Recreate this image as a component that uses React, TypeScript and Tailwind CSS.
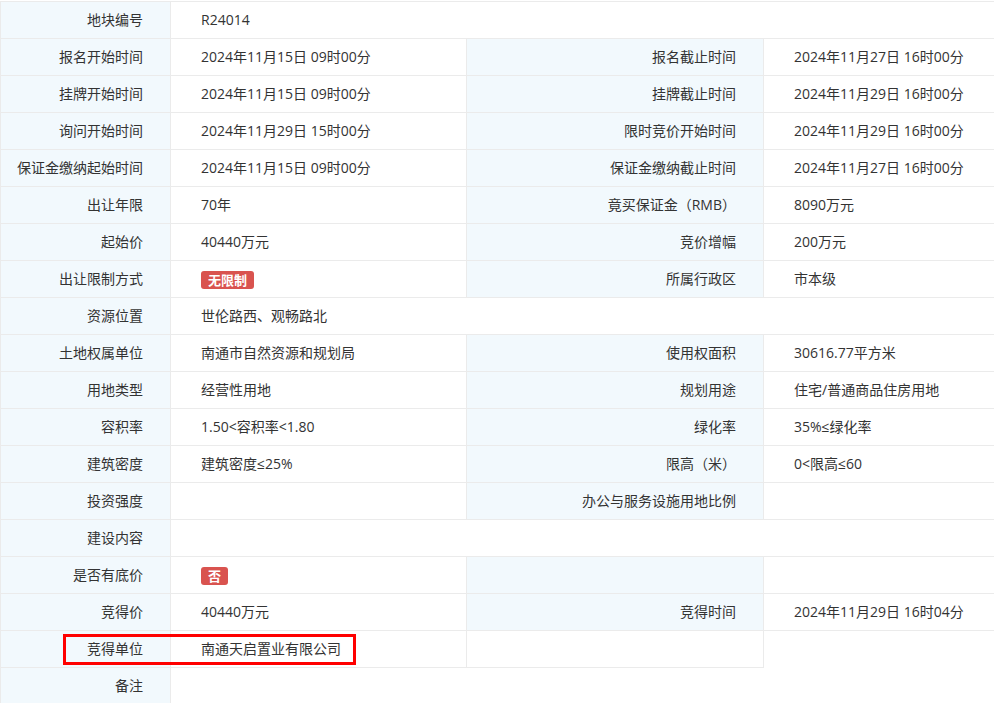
import type { ReactNode } from 'react'

type Cell = { text?: ReactNode; label?: boolean; span?: number }

const badge = (t: string) => (
  <span className="inline-block rounded-[3px] bg-[#d9534f] px-[7px] text-[13px] font-bold leading-[18px] text-white align-middle">
    {t}
  </span>
)

const L = (text?: ReactNode): Cell => ({ text, label: true })
const V = (text?: ReactNode, span?: number): Cell => ({ text, span })

const ROWS: Cell[][] = [
  [L('地块编号'), V('R24014', 3)],
  [L('报名开始时间'), V('2024年11月15日 09时00分'), L('报名截止时间'), V('2024年11月27日 16时00分')],
  [L('挂牌开始时间'), V('2024年11月15日 09时00分'), L('挂牌截止时间'), V('2024年11月29日 16时00分')],
  [L('询问开始时间'), V('2024年11月29日 15时00分'), L('限时竞价开始时间'), V('2024年11月29日 16时00分')],
  [L('保证金缴纳起始时间'), V('2024年11月15日 09时00分'), L('保证金缴纳截止时间'), V('2024年11月27日 16时00分')],
  [L('出让年限'), V('70年'), L('竟买保证金（RMB）'), V('8090万元')],
  [L('起始价'), V('40440万元'), L('竞价增幅'), V('200万元')],
  [L('出让限制方式'), V(badge('无限制')), L('所属行政区'), V('市本级')],
  [L('资源位置'), V('世伦路西、观畅路北', 3)],
  [L('土地权属单位'), V('南通市自然资源和规划局'), L('使用权面积'), V('30616.77平方米')],
  [L('用地类型'), V('经营性用地'), L('规划用途'), V('住宅/普通商品住房用地')],
  [L('容积率'), V('1.50<容积率<1.80'), L('绿化率'), V('35%≤绿化率')],
  [L('建筑密度'), V('建筑密度≤25%'), L('限高（米）'), V('0<限高≤60')],
  [L('投资强度'), V(), L('办公与服务设施用地比例'), V()],
  [L('建设内容'), V(undefined, 3)],
  [L('是否有底价'), V(badge('否')), L(), V()],
  [L('竞得价'), V('40440万元'), L('竞得时间'), V('2024年11月29日 16时04分')],
]

export default function App() {
  return (
    <div
      className="relative h-[703px] w-[994px] overflow-hidden bg-white pt-px text-[14px] text-[#333]"
      style={{ fontFamily: '"Open Sans", "Noto Sans CJK SC", sans-serif' }}
    >
      <table className="w-[994px] table-fixed border-collapse">
        <colgroup>
          <col className="w-[170px]" />
          <col className="w-[296px]" />
          <col className="w-[297px]" />
          <col className="w-[231px]" />
        </colgroup>
        <tbody>
          {ROWS.map((row, i) => (
            <tr key={i} className="h-[37px]">
              {row.map((c, j) =>
                c.label ? (
                  <td key={j} className="border border-[#ebebeb] bg-[#f2f9fd] pr-[27px] pb-[2px] text-right whitespace-nowrap">
                    {c.text}
                  </td>
                ) : (
                  <td key={j} colSpan={c.span} className="border border-[#ebebeb] pl-[30px] pb-[2px] whitespace-nowrap">
                    {c.text}
                  </td>
                )
              )}
            </tr>
          ))}
          <tr className="h-[37px]">
            <td className="border border-[#ebebeb] bg-[#f2f9fd] pr-[27px] pb-[2px] text-right">竞得单位</td>
            <td className="border border-[#ebebeb] pl-[30px] pb-[2px]">南通天启置业有限公司</td>
            <td className="border border-[#ebebeb]"></td>
            <td className="border-l border-[#ebebeb]"></td>
          </tr>
          <tr className="h-[37px]">
            <td className="border border-[#ebebeb] bg-[#f2f9fd] pr-[27px] pb-[2px] text-right">备注</td>
            <td colSpan={3} className="border-l border-[#ebebeb]"></td>
          </tr>
        </tbody>
      </table>

      {/* highlight box */}
      <div className="pointer-events-none absolute left-[63px] top-[634px] h-[31px] w-[293px] border-[3px] border-[#ff0000]" />
    </div>
  )
}
